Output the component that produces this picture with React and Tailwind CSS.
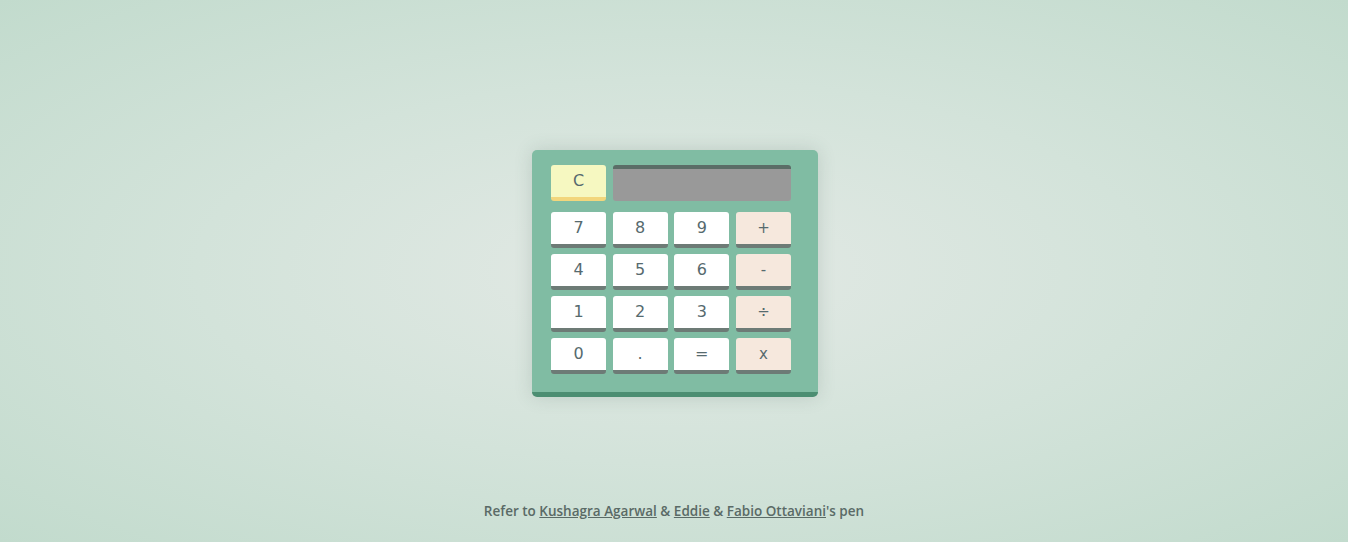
import React from "react";

const rows = [
  ["7", "8", "9", "+"],
  ["4", "5", "6", "-"],
  ["1", "2", "3", "÷"],
  ["0", ".", "=", "x"],
];

function Key({ label, op }) {
  return (
    <div
      className={
        "h-[36px] w-[55px] rounded-[3px] border-b-4 border-[#6d7b76] flex items-center justify-center text-[16px] text-[#566a6e] " +
        (op ? "bg-[#f6e8dd]" : "bg-white")
      }
    >
      <span className={op ? "text-[15px]" : ""}>{label}</span>
    </div>
  );
}

export default function App() {
  return (
    <div
      className="h-[542px] w-full flex flex-col items-center bg-[radial-gradient(ellipse_at_center,#e3e9e5_0%,#d3e3da_50%,#c2dbcd_100%)]"
      style={{ fontFamily: '"DejaVu Sans", "Liberation Sans", sans-serif' }}
    >
      <div className="pt-[150px] pl-[2px] flex justify-center">
        <div className="w-[286px] rounded-[5px] bg-[#80bca3] border-b-[5px] border-[#4c8e72] pl-[19px] pr-[27px] pt-[15px] pb-[18px] shadow-[0_0_18px_rgba(60,90,80,0.18)]">
          <div className="flex gap-x-[7px]">
            <div className="h-[36px] w-[55px] rounded-[3px] bg-[#f6f8c1] border-b-4 border-[#f2d67c] flex items-center justify-center text-[16px] text-[#566a6e]">
              C
            </div>
            <div className="h-[36px] flex-1 rounded-[3px] bg-[#999999] border-t-4 border-[#5b6d67]" />
          </div>
          <div className="mt-[11px] grid grid-cols-[55px_55px_55px_55px] gap-x-[6.67px] gap-y-[6px]">
            {rows.flat().map((k, i) => (
              <Key key={i} label={k} op={i % 4 === 3} />
            ))}
          </div>
        </div>
      </div>
      <div
        className="mt-auto pb-[21px] text-[13.5px] font-semibold text-[#5a6a66]"
        style={{ fontFamily: '"Open Sans", sans-serif' }}
      >
        Refer to <a className="underline">Kushagra Agarwal</a> &amp;{" "}
        <a className="underline">Eddie</a> &amp;{" "}
        <a className="underline">Fabio Ottaviani</a>'s pen
      </div>
    </div>
  );
}
